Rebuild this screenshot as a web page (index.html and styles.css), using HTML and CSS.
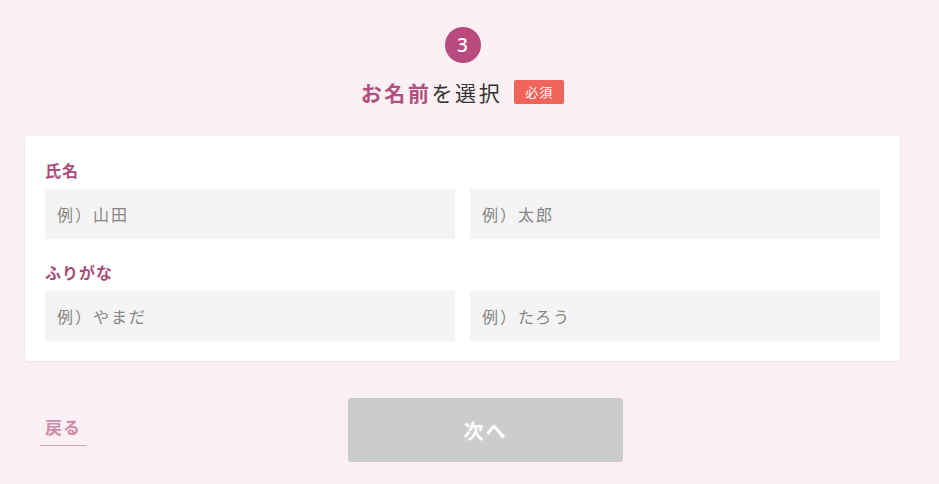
FILE: index.html
```html
<!DOCTYPE html>
<html lang="ja">
<head>
<meta charset="utf-8">
<title>お名前を選択</title>
<link rel="stylesheet" href="styles.css">
</head>
<body>
<div class="page">
  <div class="step">3</div>
  <h1 class="title"><span class="title-text"><strong>お名前</strong>を選択</span><span class="badge">必須</span></h1>
  <div class="card">
    <div class="field">
      <div class="label">氏名</div>
      <div class="row">
        <input class="input" type="text" placeholder="例）山田">
        <input class="input" type="text" placeholder="例）太郎">
      </div>
    </div>
    <div class="field">
      <div class="label">ふりがな</div>
      <div class="row">
        <input class="input" type="text" placeholder="例）やまだ">
        <input class="input" type="text" placeholder="例）たろう">
      </div>
    </div>
  </div>
  <div class="footer">
    <a class="back" href="#">戻る</a>
    <button class="next" type="button">次へ</button>
  </div>
</div>
</body>
</html>
```
FILE: styles.css
```css
* { box-sizing: border-box; }
html, body { margin: 0; padding: 0; }
body {
  background: #fbf0f4;
  font-family: "Noto Sans CJK JP", "Noto Sans", sans-serif;
  color: #333;
  width: 939px;
  height: 484px;
  overflow: hidden;
}
.page {
  width: 875px;
  margin-left: 25px;
  padding-top: 27px;
}
.step {
  width: 36px;
  height: 36px;
  margin: 0 auto;
  border-radius: 50%;
  background: #b94b7e;
  color: #fff;
  font-family: "Noto Sans", sans-serif;
  font-size: 19px;
  font-weight: 500;
  line-height: 36px;
  text-align: center;
}
.title {
  margin: 14px 0 0;
  height: 30px;
  display: flex;
  justify-content: center;
  align-items: center;
  gap: 12px;
  font-size: 21px;
  font-weight: normal;
  letter-spacing: 2.6px;
  color: #333;
}
.title strong {
  color: #b14f80;
  font-weight: bold;
}
.title-text { line-height: 30px; }
.badge {
  display: inline-block;
  width: 50px;
  height: 24px;
  line-height: 24px;
  background: #f0645c;
  color: #fff;
  font-size: 13px;
  letter-spacing: 1px;
  text-align: center;
  border-radius: 2px;
}
.card {
  margin-top: 29px;
  background: #fff;
  border-radius: 4px;
  box-shadow: 0 1px 3px rgba(180, 120, 140, 0.12);
  padding: 20px;
}
.field + .field { margin-top: 19px; }
.label {
  font-size: 16px;
  font-weight: bold;
  color: #a94d7a;
  line-height: 28px;
  margin-bottom: 5px;
  letter-spacing: 1px;
}
.row {
  display: grid;
  grid-template-columns: 1fr 1fr;
  gap: 15px;
}
.input {
  height: 50px;
  border: none;
  border-radius: 0;
  background: #f4f4f4;
  padding: 0 12px;
  font-family: "Noto Sans CJK JP", sans-serif;
  font-size: 16px;
  letter-spacing: 2px;
  color: #333;
  outline: none;
  width: 100%;
}
.input::placeholder { color: #858585; }
.footer {
  margin-top: 37px;
  display: flex;
  align-items: center;
  padding-left: 15px;
}
.back {
  display: block;
  padding: 0 5px 6px;
  line-height: 24px;
  font-size: 17px;
  font-weight: bold;
  letter-spacing: 1px;
  color: #d08aa9;
  text-decoration: none;
  border-bottom: 1px solid #d9a0b9;
}
.next {
  margin-left: 262px;
  width: 275px;
  height: 64px;
  border: none;
  border-radius: 3px;
  background: #cccccc;
  color: #fff;
  font-family: "Noto Sans CJK JP", "Noto Sans", sans-serif;
  font-size: 20px;
  font-weight: bold;
  letter-spacing: 2px;
  cursor: default;
}
```
